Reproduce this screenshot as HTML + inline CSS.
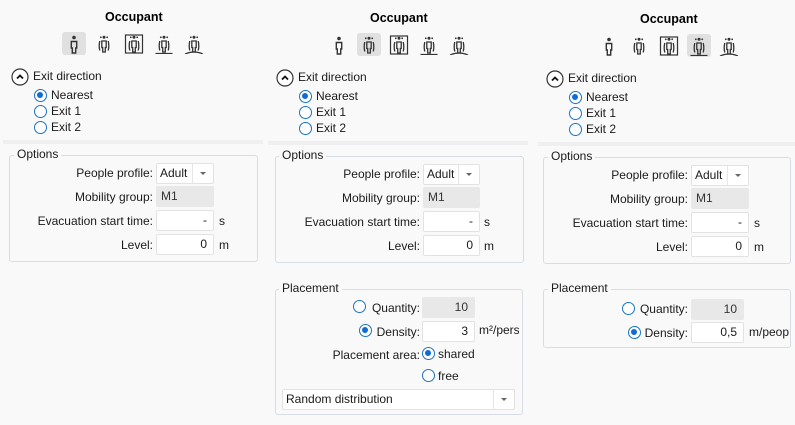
<!DOCTYPE html>
<html><head><style>
*{box-sizing:border-box;margin:0;padding:0}
body{width:795px;height:423px;background:#f9f9f9;font-family:"Liberation Sans",sans-serif;font-size:12px;color:#1a1a1a;position:relative;overflow:hidden}
.p{position:absolute;top:0;width:265px;height:423px}
.a{position:absolute;white-space:nowrap}
.t{font-weight:bold;font-size:12.5px;color:#000}
.ib{position:absolute;width:24px;height:23px;border-radius:3px}
.ib.on{background:#e0e0e0}
.ib svg{position:absolute;left:2px;top:2px}
.r{position:absolute;width:13px;height:13px;border:1.3px solid #1a73c8;border-radius:50%;background:#fff}
.r.on::after{content:"";position:absolute;left:2.2px;top:2.2px;width:6px;height:6px;border-radius:50%;background:#0f6cd0}
.sep{position:absolute;height:4px;background:#efefef}
.g{position:absolute;border:1px solid #d6dde4;border-radius:3px}
.lg{position:absolute;background:#f9f9f9;padding:0 3px}
.lb{position:absolute;text-align:right;white-space:nowrap}
.in{position:absolute;height:21px;background:#fff;border:1px solid #e2e2e2;border-radius:2px;text-align:right;padding-right:6px;line-height:19px}
.in.d{background:#e8e8e8;border-color:#e8e8e8;text-align:left;padding-left:4px;color:#333}
.in.d.rt{text-align:right}
.dd{position:absolute;height:21px;background:#fff;border:1px solid #e2e2e2;border-radius:2px;line-height:19px;padding-left:3px;overflow:hidden}
.dd .ar{position:absolute;right:0;top:0;bottom:0;width:21px;border-left:1px solid #e6e6e6}
.dd .ar::after{content:"";position:absolute;left:7px;top:8px;border-left:3px solid transparent;border-right:3px solid transparent;border-top:3px solid #666}
</style></head><body>

<svg width="0" height="0" style="position:absolute">
<defs>
<g id="p1"><circle cx="10" cy="3.5" r="1.8" fill="#333"/><path d="M7.3 7.5h5.4v6.5h-1v5h-3.4v-5h-1z" fill="none" stroke="#333" stroke-width="1.4"/></g>
<g id="p2"><circle cx="10" cy="3.3" r="1.5" fill="#333"/><circle cx="6.8" cy="3.3" r=".9" fill="#333"/><circle cx="13.2" cy="3.3" r=".9" fill="#333"/><path d="M7.8 7h4.4v6.5h-.9v4.5H8.7v-4.5h-.9z" fill="none" stroke="#333" stroke-width="1.3"/><path d="M5.8 7q-1.2 5 0 9.5M14.2 7q1.2 5 0 9.5" fill="none" stroke="#333" stroke-width="1.3"/></g>
</defs></svg>

<div class="p" style="left:0;top:0">
<div class="a t" style="left:105px;top:10px">Occupant</div>
<div class="ib on" style="left:62px;top:32px"><svg width="20" height="20"><use href="#p1"/></svg></div>
<div class="ib" style="left:92px;top:32px"><svg width="20" height="20"><use href="#p2"/></svg></div>
<div class="ib" style="left:122px;top:32px"><svg width="20" height="20"><rect x="1.5" y="1" width="17" height="18" fill="none" stroke="#333" stroke-width="1.2"/><use href="#p2"/></svg></div>
<div class="ib" style="left:152px;top:32px"><svg width="20" height="20"><use href="#p2"/><path d="M1.5 19.5h17" stroke="#333" stroke-width="1.2"/></svg></div>
<div class="ib" style="left:182px;top:32px"><svg width="20" height="20"><use href="#p2"/><path d="M1 20q9-4 18 0" fill="none" stroke="#333" stroke-width="1.2"/></svg></div>
<svg class="a" style="left:11px;top:68px" width="18" height="18"><circle cx="9" cy="9" r="8" fill="#fff" stroke="#333" stroke-width="1.2"/><path d="M6 10.5l3-3 3 3" fill="none" stroke="#111" stroke-width="1.8"/></svg>
<div class="a" style="left:33px;top:69px">Exit direction</div>
<div class="r on" style="left:34px;top:89px"></div><div class="a" style="left:51px;top:88px">Nearest</div>
<div class="r" style="left:34px;top:105px"></div><div class="a" style="left:51px;top:104px">Exit 1</div>
<div class="r" style="left:34px;top:121px"></div><div class="a" style="left:51px;top:120px">Exit 2</div>
<div class="sep" style="left:3px;top:140px;width:260px"></div>
<div class="g" style="left:9px;top:155px;width:249px;height:107px"></div>
<div class="lg" style="left:14px;top:147px">Options</div>
<div class="lb" style="right:112px;top:166px">People profile:</div>
<div class="dd" style="left:156px;top:163px;width:58px">Adult<div class="ar"></div></div>
<div class="lb" style="right:112px;top:190px">Mobility group:</div>
<div class="in d" style="left:156px;top:186px;width:58px">M1</div>
<div class="lb" style="right:112px;top:214px">Evacuation start time:</div>
<div class="in" style="left:156px;top:210px;width:58px">-</div><div class="a" style="left:219px;top:214px">s</div>
<div class="lb" style="right:112px;top:238px">Level:</div>
<div class="in" style="left:156px;top:234px;width:58px">0</div><div class="a" style="left:219px;top:238px">m</div>
</div>

<div class="p" style="left:265px;top:1px">
<div class="a t" style="left:105px;top:10px">Occupant</div>
<div class="ib" style="left:62px;top:32px"><svg width="20" height="20"><use href="#p1"/></svg></div>
<div class="ib on" style="left:92px;top:32px"><svg width="20" height="20"><use href="#p2"/></svg></div>
<div class="ib" style="left:122px;top:32px"><svg width="20" height="20"><rect x="1.5" y="1" width="17" height="18" fill="none" stroke="#333" stroke-width="1.2"/><use href="#p2"/></svg></div>
<div class="ib" style="left:152px;top:32px"><svg width="20" height="20"><use href="#p2"/><path d="M1.5 19.5h17" stroke="#333" stroke-width="1.2"/></svg></div>
<div class="ib" style="left:182px;top:32px"><svg width="20" height="20"><use href="#p2"/><path d="M1 20q9-4 18 0" fill="none" stroke="#333" stroke-width="1.2"/></svg></div>
<svg class="a" style="left:11px;top:68px" width="18" height="18"><circle cx="9" cy="9" r="8" fill="#fff" stroke="#333" stroke-width="1.2"/><path d="M6 10.5l3-3 3 3" fill="none" stroke="#111" stroke-width="1.8"/></svg>
<div class="a" style="left:33px;top:69px">Exit direction</div>
<div class="r on" style="left:34px;top:89px"></div><div class="a" style="left:51px;top:88px">Nearest</div>
<div class="r" style="left:34px;top:105px"></div><div class="a" style="left:51px;top:104px">Exit 1</div>
<div class="r" style="left:34px;top:121px"></div><div class="a" style="left:51px;top:120px">Exit 2</div>
<div class="sep" style="left:3px;top:140px;width:260px"></div>
<div class="g" style="left:10px;top:155px;width:249px;height:107px"></div>
<div class="lg" style="left:14px;top:147px">Options</div>
<div class="lb" style="right:110px;top:166px">People profile:</div>
<div class="dd" style="left:158px;top:163px;width:57px">Adult<div class="ar"></div></div>
<div class="lb" style="right:110px;top:190px">Mobility group:</div>
<div class="in d" style="left:158px;top:186px;width:57px">M1</div>
<div class="lb" style="right:110px;top:214px">Evacuation start time:</div>
<div class="in" style="left:158px;top:210px;width:57px">-</div><div class="a" style="left:219px;top:214px">s</div>
<div class="lb" style="right:110px;top:238px">Level:</div>
<div class="in" style="left:158px;top:234px;width:57px">0</div><div class="a" style="left:219px;top:238px">m</div>
<div class="g" style="left:10px;top:288px;width:248px;height:126px"></div>
<div class="lg" style="left:14px;top:280px">Placement</div>
<div class="r" style="left:88px;top:299px"></div><div class="lb" style="right:110px;top:300px">Quantity:</div>
<div class="in d rt" style="left:157px;top:296px;width:53px">10</div>
<div class="r on" style="left:94px;top:323px"></div><div class="lb" style="right:110px;top:324px">Density:</div>
<div class="in" style="left:157px;top:320px;width:53px">3</div><div class="a" style="left:214px;top:322px;width:40px;overflow:hidden">m²/pers</div>
<div class="lb" style="right:110px;top:347px">Placement area:</div>
<div class="r on" style="left:157px;top:346px"></div><div class="a" style="left:173px;top:346px">shared</div>
<div class="r" style="left:157px;top:368px"></div><div class="a" style="left:173px;top:368px">free</div>
<div class="dd" style="left:17px;top:388px;width:233px;padding-left:3px">Random distribution<div class="ar"></div></div>
</div>

<div class="p" style="left:535px;top:2px">
<div class="a t" style="left:105px;top:10px">Occupant</div>
<div class="ib" style="left:62px;top:32px"><svg width="20" height="20"><use href="#p1"/></svg></div>
<div class="ib" style="left:92px;top:32px"><svg width="20" height="20"><use href="#p2"/></svg></div>
<div class="ib" style="left:122px;top:32px"><svg width="20" height="20"><rect x="1.5" y="1" width="17" height="18" fill="none" stroke="#333" stroke-width="1.2"/><use href="#p2"/></svg></div>
<div class="ib on" style="left:152px;top:32px"><svg width="20" height="20"><use href="#p2"/><path d="M1.5 19.5h17" stroke="#333" stroke-width="1.2"/></svg></div>
<div class="ib" style="left:182px;top:32px"><svg width="20" height="20"><use href="#p2"/><path d="M1 20q9-4 18 0" fill="none" stroke="#333" stroke-width="1.2"/></svg></div>
<svg class="a" style="left:11px;top:68px" width="18" height="18"><circle cx="9" cy="9" r="8" fill="#fff" stroke="#333" stroke-width="1.2"/><path d="M6 10.5l3-3 3 3" fill="none" stroke="#111" stroke-width="1.8"/></svg>
<div class="a" style="left:33px;top:69px">Exit direction</div>
<div class="r on" style="left:34px;top:89px"></div><div class="a" style="left:51px;top:88px">Nearest</div>
<div class="r" style="left:34px;top:105px"></div><div class="a" style="left:51px;top:104px">Exit 1</div>
<div class="r" style="left:34px;top:121px"></div><div class="a" style="left:51px;top:120px">Exit 2</div>
<div class="sep" style="left:3px;top:140px;width:260px"></div>
<div class="g" style="left:8px;top:155px;width:248px;height:107px"></div>
<div class="lg" style="left:13px;top:147px">Options</div>
<div class="lb" style="right:112px;top:166px">People profile:</div>
<div class="dd" style="left:156px;top:163px;width:58px">Adult<div class="ar"></div></div>
<div class="lb" style="right:112px;top:190px">Mobility group:</div>
<div class="in d" style="left:156px;top:186px;width:58px">M1</div>
<div class="lb" style="right:112px;top:214px">Evacuation start time:</div>
<div class="in" style="left:156px;top:210px;width:58px">-</div><div class="a" style="left:219px;top:214px">s</div>
<div class="lb" style="right:112px;top:238px">Level:</div>
<div class="in" style="left:156px;top:234px;width:58px">0</div><div class="a" style="left:219px;top:238px">m</div>
<div class="g" style="left:8px;top:287px;width:248px;height:59px"></div>
<div class="lg" style="left:13px;top:279px">Placement</div>
<div class="r" style="left:87px;top:300px"></div><div class="lb" style="right:112px;top:300px">Quantity:</div>
<div class="in d rt" style="left:156px;top:297px;width:53px">10</div>
<div class="r on" style="left:93px;top:324px"></div><div class="lb" style="right:112px;top:324px">Density:</div>
<div class="in" style="left:156px;top:320px;width:53px">0,5</div><div class="a" style="left:214px;top:323px;width:40px;overflow:hidden">m/peop</div>
</div>
</body></html>
